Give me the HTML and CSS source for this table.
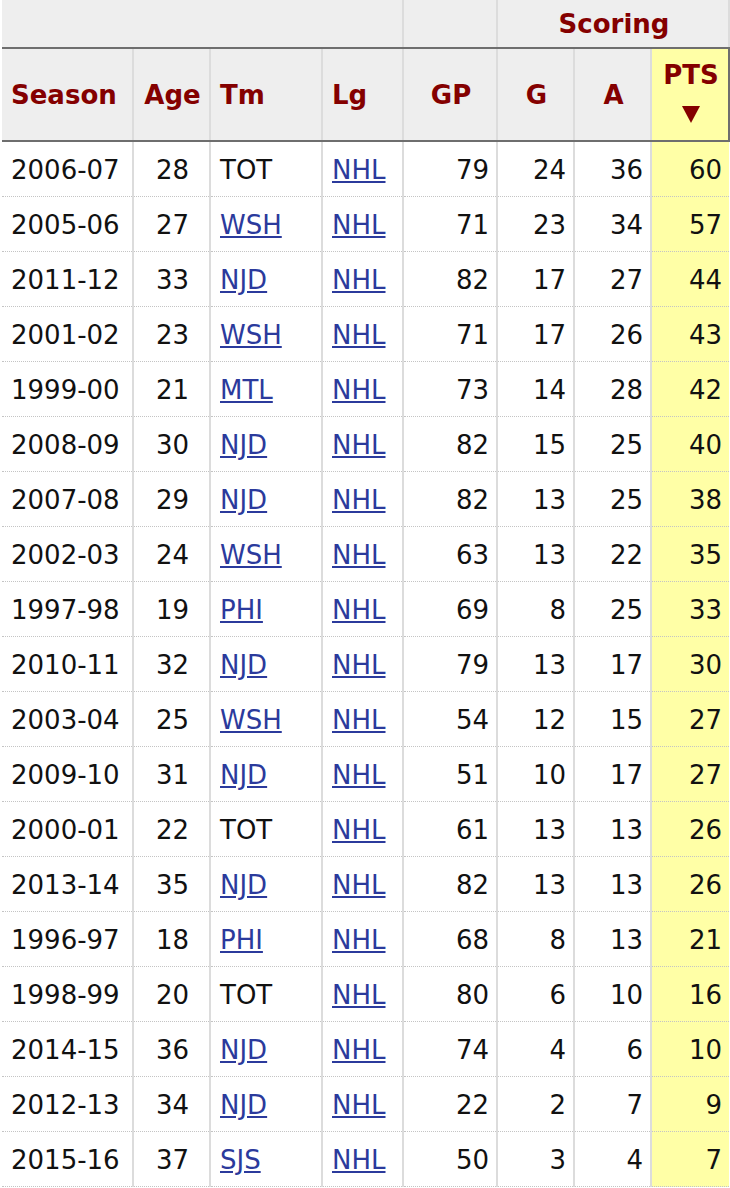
FILE: index.html
```html
<!doctype html>
<html>
	<head>
		<title>Career Stats</title>
		<meta charset="UTF-8">
		<link rel="stylesheet" href="styles.css">
	</head>
	<body>
		<table class="stats">
			<colgroup>
				<col class="w-season"><col class="w-age"><col class="w-tm"><col class="w-lg">
				<col class="w-gp"><col class="w-g"><col class="w-a"><col class="w-pts">
			</colgroup>
			<thead>
				<tr class="over">
					<th colspan="4" class="first"></th>
					<th></th>
					<th colspan="3">Scoring</th>
				</tr>
				<tr class="heads">
					<th class="first left">Season</th>
					<th>Age</th>
					<th class="left">Tm</th>
					<th class="left">Lg</th>
					<th>GP</th>
					<th>G</th>
					<th>A</th>
					<th class="sorted">PTS<span class="arrow"></span></th>
				</tr>
			</thead>
			<tbody>
				<tr><td class="first">2006-07</td><td class="mid">28</td><td>TOT</td><td><a href="#">NHL</a></td><td class="num">79</td><td class="num">24</td><td class="num">36</td><td class="num pts">60</td></tr>
				<tr><td class="first">2005-06</td><td class="mid">27</td><td><a href="#">WSH</a></td><td><a href="#">NHL</a></td><td class="num">71</td><td class="num">23</td><td class="num">34</td><td class="num pts">57</td></tr>
				<tr><td class="first">2011-12</td><td class="mid">33</td><td><a href="#">NJD</a></td><td><a href="#">NHL</a></td><td class="num">82</td><td class="num">17</td><td class="num">27</td><td class="num pts">44</td></tr>
				<tr><td class="first">2001-02</td><td class="mid">23</td><td><a href="#">WSH</a></td><td><a href="#">NHL</a></td><td class="num">71</td><td class="num">17</td><td class="num">26</td><td class="num pts">43</td></tr>
				<tr><td class="first">1999-00</td><td class="mid">21</td><td><a href="#">MTL</a></td><td><a href="#">NHL</a></td><td class="num">73</td><td class="num">14</td><td class="num">28</td><td class="num pts">42</td></tr>
				<tr><td class="first">2008-09</td><td class="mid">30</td><td><a href="#">NJD</a></td><td><a href="#">NHL</a></td><td class="num">82</td><td class="num">15</td><td class="num">25</td><td class="num pts">40</td></tr>
				<tr><td class="first">2007-08</td><td class="mid">29</td><td><a href="#">NJD</a></td><td><a href="#">NHL</a></td><td class="num">82</td><td class="num">13</td><td class="num">25</td><td class="num pts">38</td></tr>
				<tr><td class="first">2002-03</td><td class="mid">24</td><td><a href="#">WSH</a></td><td><a href="#">NHL</a></td><td class="num">63</td><td class="num">13</td><td class="num">22</td><td class="num pts">35</td></tr>
				<tr><td class="first">1997-98</td><td class="mid">19</td><td><a href="#">PHI</a></td><td><a href="#">NHL</a></td><td class="num">69</td><td class="num">8</td><td class="num">25</td><td class="num pts">33</td></tr>
				<tr><td class="first">2010-11</td><td class="mid">32</td><td><a href="#">NJD</a></td><td><a href="#">NHL</a></td><td class="num">79</td><td class="num">13</td><td class="num">17</td><td class="num pts">30</td></tr>
				<tr><td class="first">2003-04</td><td class="mid">25</td><td><a href="#">WSH</a></td><td><a href="#">NHL</a></td><td class="num">54</td><td class="num">12</td><td class="num">15</td><td class="num pts">27</td></tr>
				<tr><td class="first">2009-10</td><td class="mid">31</td><td><a href="#">NJD</a></td><td><a href="#">NHL</a></td><td class="num">51</td><td class="num">10</td><td class="num">17</td><td class="num pts">27</td></tr>
				<tr><td class="first">2000-01</td><td class="mid">22</td><td>TOT</td><td><a href="#">NHL</a></td><td class="num">61</td><td class="num">13</td><td class="num">13</td><td class="num pts">26</td></tr>
				<tr><td class="first">2013-14</td><td class="mid">35</td><td><a href="#">NJD</a></td><td><a href="#">NHL</a></td><td class="num">82</td><td class="num">13</td><td class="num">13</td><td class="num pts">26</td></tr>
				<tr><td class="first">1996-97</td><td class="mid">18</td><td><a href="#">PHI</a></td><td><a href="#">NHL</a></td><td class="num">68</td><td class="num">8</td><td class="num">13</td><td class="num pts">21</td></tr>
				<tr><td class="first">1998-99</td><td class="mid">20</td><td>TOT</td><td><a href="#">NHL</a></td><td class="num">80</td><td class="num">6</td><td class="num">10</td><td class="num pts">16</td></tr>
				<tr><td class="first">2014-15</td><td class="mid">36</td><td><a href="#">NJD</a></td><td><a href="#">NHL</a></td><td class="num">74</td><td class="num">4</td><td class="num">6</td><td class="num pts">10</td></tr>
				<tr><td class="first">2012-13</td><td class="mid">34</td><td><a href="#">NJD</a></td><td><a href="#">NHL</a></td><td class="num">22</td><td class="num">2</td><td class="num">7</td><td class="num pts">9</td></tr>
				<tr><td class="first">2015-16</td><td class="mid">37</td><td><a href="#">SJS</a></td><td><a href="#">NHL</a></td><td class="num">50</td><td class="num">3</td><td class="num">4</td><td class="num pts">7</td></tr>
			</tbody>
		</table>
	</body>
</html>
```

FILE: styles.css
```css
body {
	margin: 0;
	background: #fff;
	font-family: "DejaVu Sans", Verdana, sans-serif;
	font-size: 26px;
	color: #111;
}
.stats {
	margin-left: 2px;
	width: 727px;
	border-collapse: collapse;
	table-layout: fixed;
}
.w-season { width: 131px; }
.w-age { width: 77px; }
.w-tm { width: 112px; }
.w-lg { width: 81px; }
.w-gp { width: 94px; }
.w-g { width: 77px; }
.w-a { width: 77px; }
.w-pts { width: 78px; }
th, td {
	padding: 0 7px 0 9px;
	border-left: 2px solid #dcdcdc;
	border-right: 2px solid #dcdcdc;
	white-space: nowrap;
}
th.first, td.first {
	border-left: none;
}
th {
	background: #eeeeee;
	color: #840000;
	font-weight: bold;
	text-align: center;
	vertical-align: middle;
}
th.left {
	text-align: left;
}
.over th {
	height: 47px;
	border-bottom: 2px solid #6e6e6e;
}
.heads th {
	height: 91px;
	border-bottom: 2px solid #6e6e6e;
}
.heads th.sorted {
	height: 80px;
	vertical-align: top;
	padding-top: 11px;
	line-height: 30px;
	background: #ffffa6;
	border: 2px solid #6e6e6e;
}
.arrow {
	display: block;
	width: 0;
	height: 0;
	margin: 16px auto 0;
	border-left: 9px solid transparent;
	border-right: 9px solid transparent;
	border-top: 17px solid #840000;
}
td {
	height: 52px;
	padding-top: 2px;
	border-bottom: 1px dotted #c4c4c4;
	text-align: left;
}
td.mid {
	text-align: center;
}
td.num {
	text-align: right;
}
td.pts {
	background: #ffffa6;
	border-right: none;
}
a {
	color: #2b3a9c;
	text-decoration: underline;
}
```
